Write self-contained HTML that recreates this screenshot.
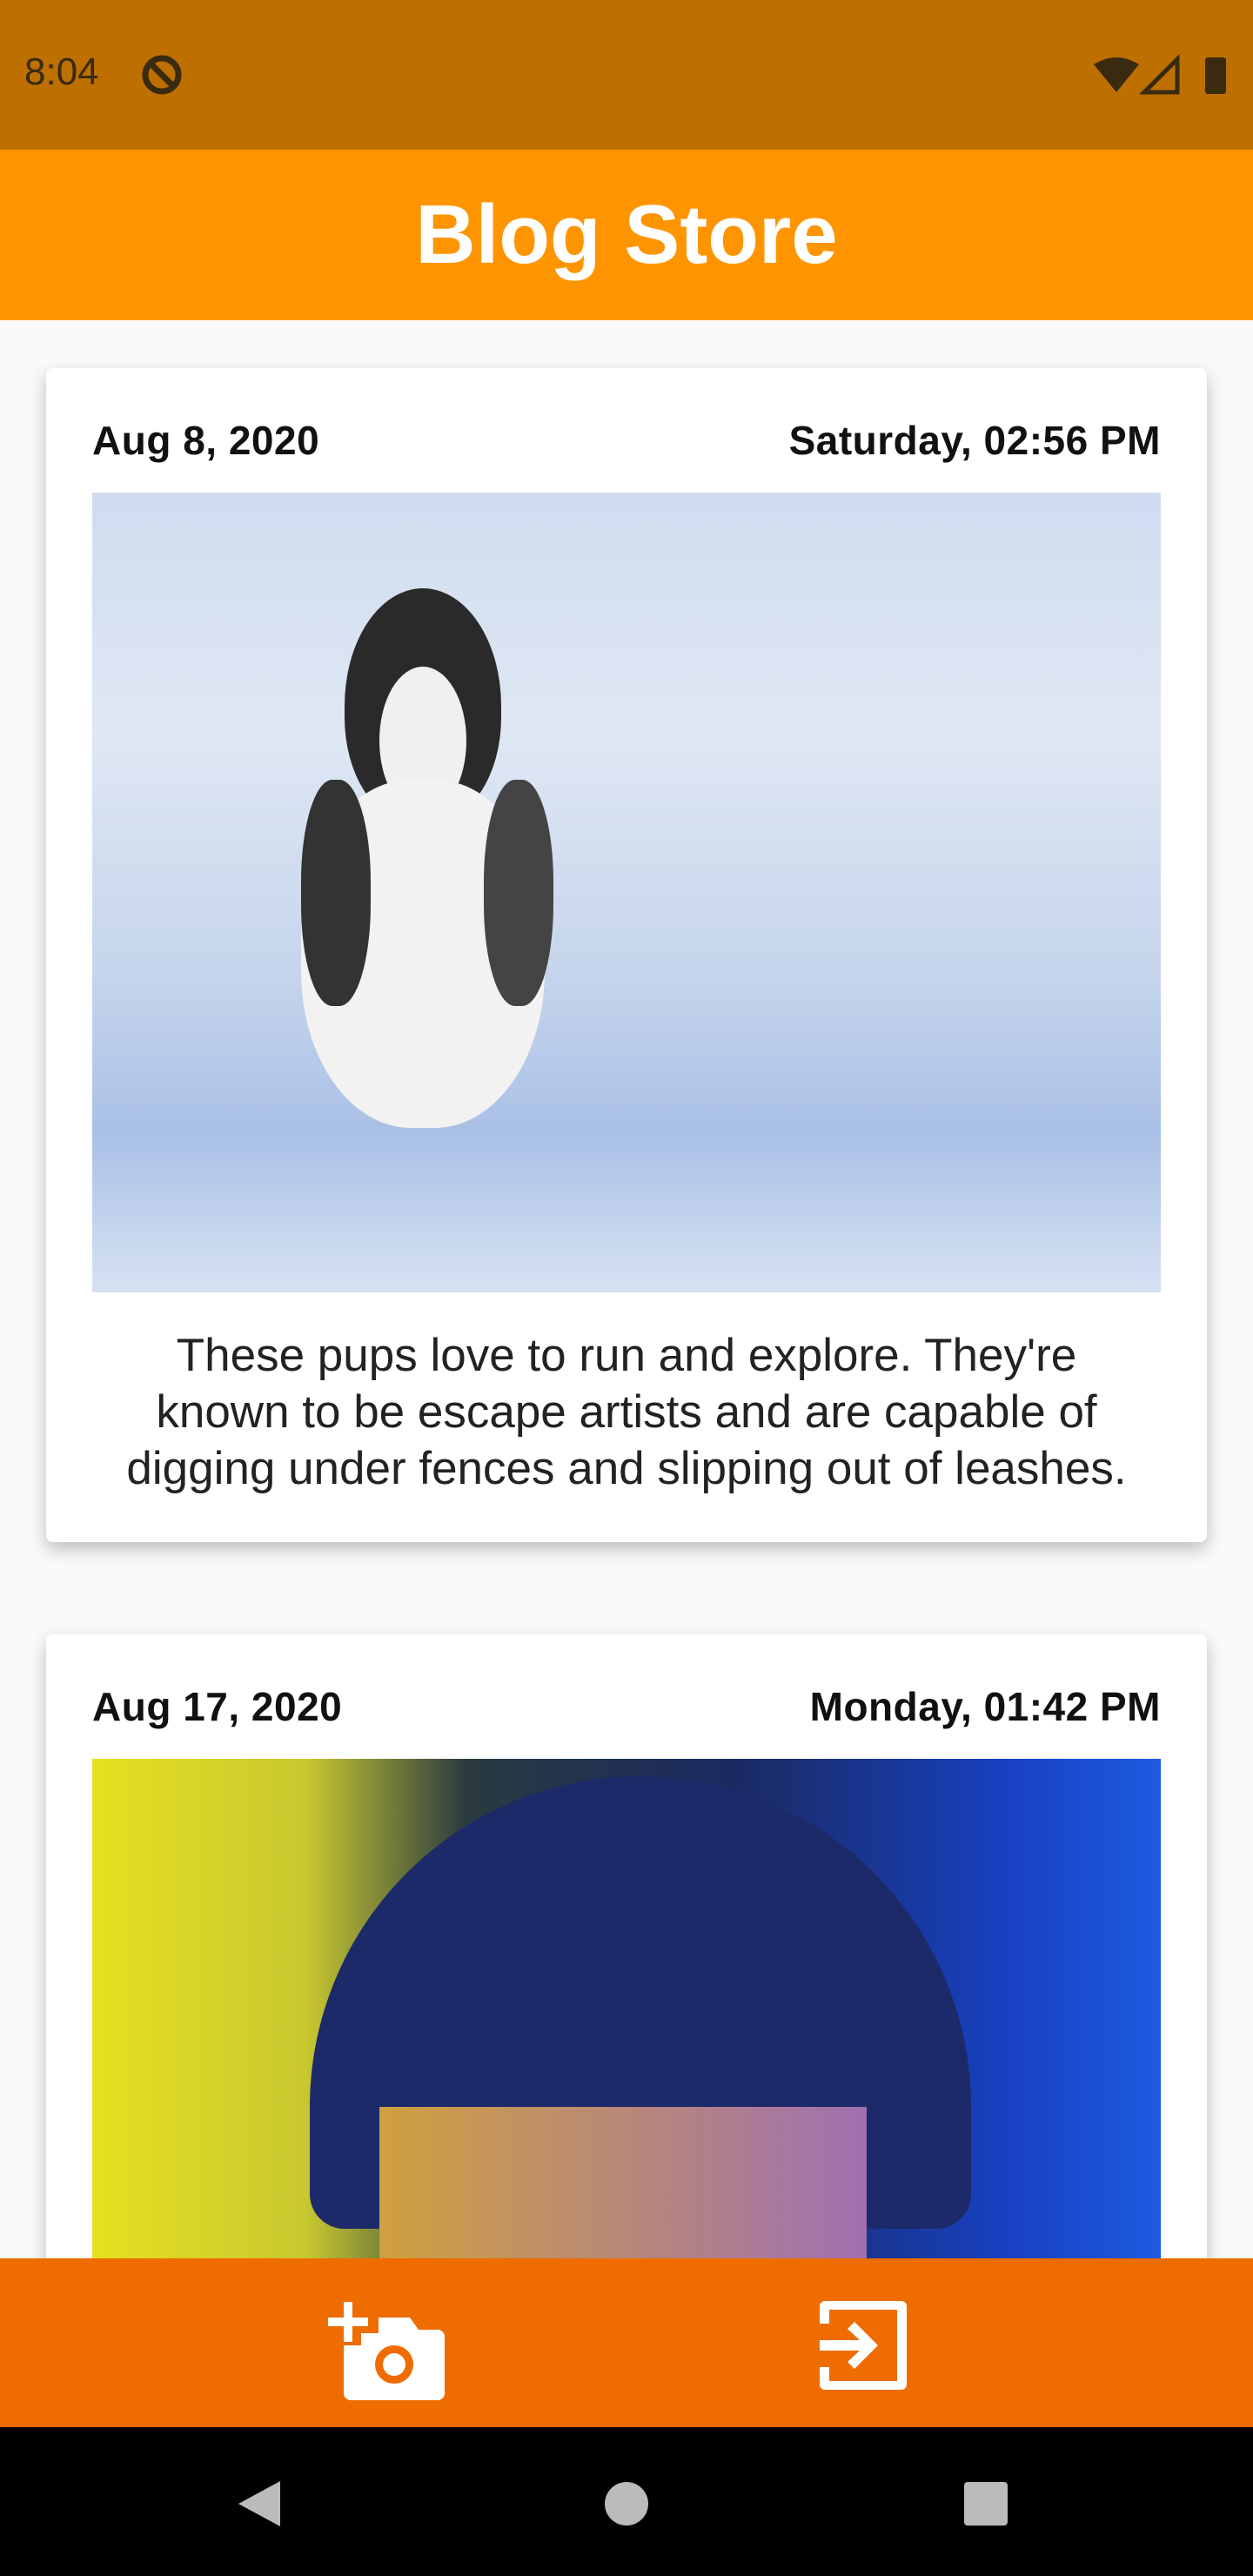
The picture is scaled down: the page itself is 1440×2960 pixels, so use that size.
<!DOCTYPE html>
<html><head><meta charset="utf-8"><style>
*{margin:0;padding:0;box-sizing:border-box}
body{width:1440px;height:2960px;overflow:hidden;background:#fafafa;font-family:"Liberation Sans",Roboto,sans-serif;position:relative}
.status{position:absolute;top:0;left:0;width:1440px;height:172px;background:#bd7000;color:#3a2a10}
.appbar{position:absolute;top:172px;left:0;width:1440px;height:196px;background:#fe9500;color:#fff;font-weight:bold;font-size:96px;text-align:center;line-height:196px}
.card{position:absolute;left:53px;width:1334px;background:#fff;border-radius:8px;box-shadow:0 8px 20px rgba(0,0,0,.25)}
.date{position:absolute;top:56px;font-size:46px;font-weight:bold;color:#111;letter-spacing:0.5px}
.img{position:absolute;left:53px;width:1228px;overflow:hidden}
.txt{position:absolute;left:0;width:1334px;text-align:center;font-size:53px;line-height:65px;color:#222}
.bottom{position:absolute;top:2595px;left:0;width:1440px;height:194px;background:#ee6c00}
.nav{position:absolute;top:2789px;left:0;width:1440px;height:171px;background:#000}
</style></head><body>
<div class="status">
<div style="position:absolute;left:28px;top:58px;font-size:44px">8:04</div>
<svg style="position:absolute;left:160px;top:60px" width="52" height="52" viewBox="0 0 52 52"><circle cx="26" cy="26" r="19" fill="none" stroke="#3a2a10" stroke-width="7"/><line x1="14" y1="14" x2="38" y2="38" stroke="#3a2a10" stroke-width="7"/></svg>
<svg style="position:absolute;left:1255px;top:62px" width="160" height="50" viewBox="0 0 160 50"><path d="M2 12 Q28 -4 54 12 L28 44 Z" fill="#3a2a10"/><path d="M60 44 L98 6 L98 44 Z" fill="none" stroke="#3a2a10" stroke-width="5"/><rect x="130" y="4" width="24" height="42" rx="3" fill="#3a2a10"/></svg>
</div>
<div class="appbar">Blog Store</div>

<div class="card" style="top:423px;height:1349px">
<div class="date" style="left:53px">Aug 8, 2020</div>
<div class="date" style="right:53px">Saturday, 02:56 PM</div>
<div class="img" style="top:143px;height:919px;background:linear-gradient(180deg,#cfdcef 0%,#dfe7f3 30%,#c6d5ec 60%,#a9c0e6 80%,#d7e2f2 100%)">
<div style="position:absolute;left:290px;top:110px;width:180px;height:270px;border-radius:50% 50% 45% 45%;background:#2a2a2a"></div>
<div style="position:absolute;left:330px;top:200px;width:100px;height:170px;border-radius:50%;background:#f0f0f0"></div>
<div style="position:absolute;left:240px;top:330px;width:280px;height:400px;border-radius:45%;background:#f2f2f2"></div>
<div style="position:absolute;left:240px;top:330px;width:80px;height:260px;border-radius:45%;background:#333"></div>
<div style="position:absolute;left:450px;top:330px;width:80px;height:260px;border-radius:45%;background:#444"></div>
</div>
<div class="txt" style="top:1102px">These pups love to run and explore. They're<br>known to be escape artists and are capable of<br>digging under fences and slipping out of leashes.</div>
</div>

<div class="card" style="top:1878px;height:900px">
<div class="date" style="left:53px">Aug 17, 2020</div>
<div class="date" style="right:53px">Monday, 01:42 PM</div>
<div class="img" style="top:143px;height:700px;background:linear-gradient(90deg,#e6e020 0%,#c8c830 20%,#2a3a40 35%,#1a2a60 60%,#1840c0 85%,#1e5ae0 100%)">
<div style="position:absolute;left:250px;top:20px;width:760px;height:520px;border-radius:380px 380px 40px 40px;background:#1c2a6a"></div>
<div style="position:absolute;left:330px;top:400px;width:560px;height:300px;background:linear-gradient(90deg,#d0a040,#a070b0)"></div>
</div>
</div>

<div class="bottom">
<svg style="position:absolute;left:375px;top:50px" width="140" height="120" viewBox="0 0 140 120"><path d="M20 0h10v18h18v10H30v18H20V28H2V18h18z" fill="#fff"/><path d="M20 50h0v55a8 8 0 0 0 8 8h100a8 8 0 0 0 8-8V40a8 8 0 0 0-8-8h-22l-10-14H60v18H40v14z" fill="#fff"/><circle cx="78" cy="72" r="22" fill="#ee6c00"/><circle cx="78" cy="72" r="13" fill="#fff"/></svg>
<svg style="position:absolute;left:938px;top:45px" width="110" height="110" viewBox="0 0 110 110"><path d="M4 30V10a6 6 0 0 1 6-6h88a6 6 0 0 1 6 6v90a6 6 0 0 1-6 6H10a6 6 0 0 1-6-6V80h11v16h78V14H15v16z" fill="#fff"/><path d="M44 28l-8 8 14 13H4v12h46L36 74l8 8 27-27z" fill="#fff"/></svg>
</div>
<div class="nav">
<svg style="position:absolute;left:270px;top:60px" width="56" height="56" viewBox="0 0 56 56"><path d="M52 2v52L4 28z" fill="#bbb"/></svg>
<div style="position:absolute;left:695px;top:63px;width:50px;height:50px;border-radius:50%;background:#bbb"></div>
<div style="position:absolute;left:1108px;top:63px;width:50px;height:50px;border-radius:4px;background:#bbb"></div>
</div>
</body></html>
